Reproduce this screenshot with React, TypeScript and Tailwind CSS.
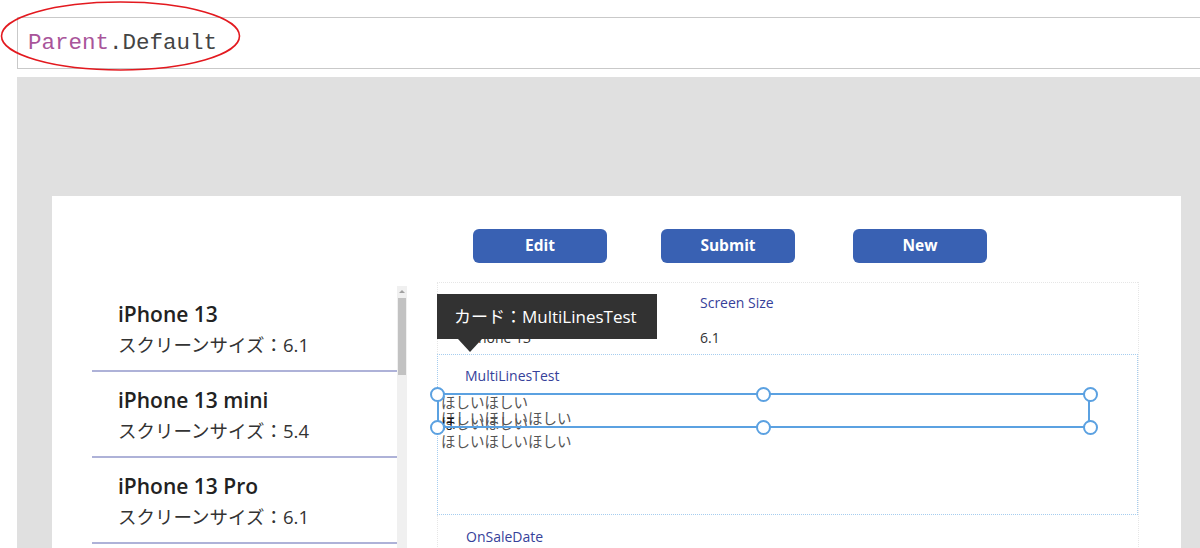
const fontUi = "font-['Open_Sans','Noto_Sans_CJK_JP',sans-serif]";

const phones = [
  { name: "iPhone 13", size: "6.1" },
  { name: "iPhone 13 mini", size: "5.4" },
  { name: "iPhone 13 Pro", size: "6.1" },
];

const Handle = ({ className }: { className: string }) => (
  <div
    className={`absolute h-[15px] w-[15px] rounded-full border-2 border-[#5ba1e1] bg-white ${className}`}
  />
);

const App = () => {
  return (
    <div className={`relative h-[548px] w-[1200px] overflow-hidden bg-white ${fontUi}`}>
      {/* formula bar */}
      <div className="ml-[17px] mt-[17px] flex h-[52px] items-center border border-r-0 border-[#c9c9c9] pl-[10px] pt-[2px]">
        <span className="font-['Liberation_Mono',monospace] text-[22.5px] text-[#444]">
          <span className="text-[#a9559a]">Parent</span>.Default
        </span>
      </div>

      <svg className="absolute left-0 top-0" width="250" height="76" viewBox="0 0 250 76">
        <ellipse cx="120.5" cy="36" rx="119" ry="34" fill="none" stroke="#e3191f" strokeWidth="1.6" />
      </svg>

      {/* canvas */}
      <div className="ml-[17px] mt-[8px] h-[471px] bg-[#e0e0e0] pl-[35px] pr-[19px] pt-[119px]">
        <div className="h-full bg-white">
          <div className="flex pt-[33px]">
            {["Edit", "Submit", "New"].map((label, i) => (
              <button
                key={label}
                type="button"
                className={`flex h-[34px] w-[134px] items-center justify-center rounded-[6px] bg-[#3961b3] text-[15.5px] font-bold text-white ${
                  i === 0 ? "ml-[421px]" : i === 1 ? "ml-[54px]" : "ml-[58px]"
                }`}
              >
                {label}
              </button>
            ))}
          </div>

          <div className="mt-[19px] flex">
            {/* gallery */}
            <div className="ml-[40px] mt-[4px] flex">
              <div className="w-[305px]">
                {phones.map((p) => (
                  <div key={p.name} className="h-[86px] border-b-2 border-[#aeb2d8] pl-[26px] pt-[14px]">
                    <div className="text-[21px] font-semibold leading-[28px] text-[#222]">{p.name}</div>
                    <div className="text-[18.5px] leading-[33px] text-[#333]">スクリーンサイズ：{p.size}</div>
                  </div>
                ))}
              </div>
              <div className="flex h-[263px] w-[10px] flex-col items-center bg-[#f0f0f0]">
                <div className="mt-[4px] h-0 w-0 border-x-[3px] border-b-[3px] border-x-transparent border-b-[#a0a0a0]" />
                <div className="mt-[5px] h-[77px] w-[8px] bg-[#c2c2c2]" />
              </div>
            </div>

            {/* form */}
            <div className="relative ml-[30px] w-[702px] border-r border-dotted border-[#e6e6e6] text-[14px] text-[#333]">
              <div className="flex h-[72px] border-l border-t border-dotted border-[#e6e6e6]">
                <div className="w-[262px] pl-[28px] pt-[10px]">
                  <div className="leading-[20px] text-[#36419a]">Name</div>
                  <div className="mt-[15px] leading-[20px]">iPhone 13</div>
                </div>
                <div className="pt-[10px]">
                  <div className="leading-[20px] text-[#36419a]">Screen Size</div>
                  <div className="mt-[15px] leading-[20px]">6.1</div>
                </div>
              </div>

              <div className="relative h-[161px] border border-dotted border-[#a6cdef]">
                <div className="pl-[27px] pt-[11px] leading-[20px] text-[#36419a]">MultiLinesTest</div>
                <div className="pl-[3px] pt-[8px] text-[14.5px] leading-[17px] text-[#555]">
                  <div>ほしいほしい</div>
                  <div className="-mt-px">ほしいほしいほしい</div>
                  <div className="-mt-[12px]">
                    <span className="text-[#111]">ほ</span>しいほしい
                  </div>
                  <div className="mt-[1px]">ほしいほしいほしい</div>
                </div>

                {/* selection */}
                <div className="absolute left-[-1px] top-[38px] h-[35px] w-[653px] border-2 border-[#5ba1e1]" />
                <Handle className="left-[-8px] top-[32px]" />
                <Handle className="left-[318px] top-[32px]" />
                <Handle className="left-[645px] top-[32px]" />
                <Handle className="left-[-8px] top-[65px]" />
                <Handle className="left-[318px] top-[65px]" />
                <Handle className="left-[645px] top-[65px]" />
              </div>

              <div className="h-[40px] border-l border-dotted border-[#e6e6e6] pl-[28px] pt-[12px] leading-[20px] text-[#36419a]">
                OnSaleDate
              </div>

              {/* tooltip */}
              <div className="absolute left-0 top-[12px]">
                <div className="flex h-[45px] w-[220px] items-center bg-[#323232] pl-[17px] text-[17px] text-white">
                  カード：MultiLinesTest
                </div>
                <div className="ml-[21px] h-0 w-0 border-x-[12px] border-t-[13px] border-x-transparent border-t-[#323232]" />
              </div>
            </div>
          </div>
        </div>
      </div>
    </div>
  );
};

export default App;
